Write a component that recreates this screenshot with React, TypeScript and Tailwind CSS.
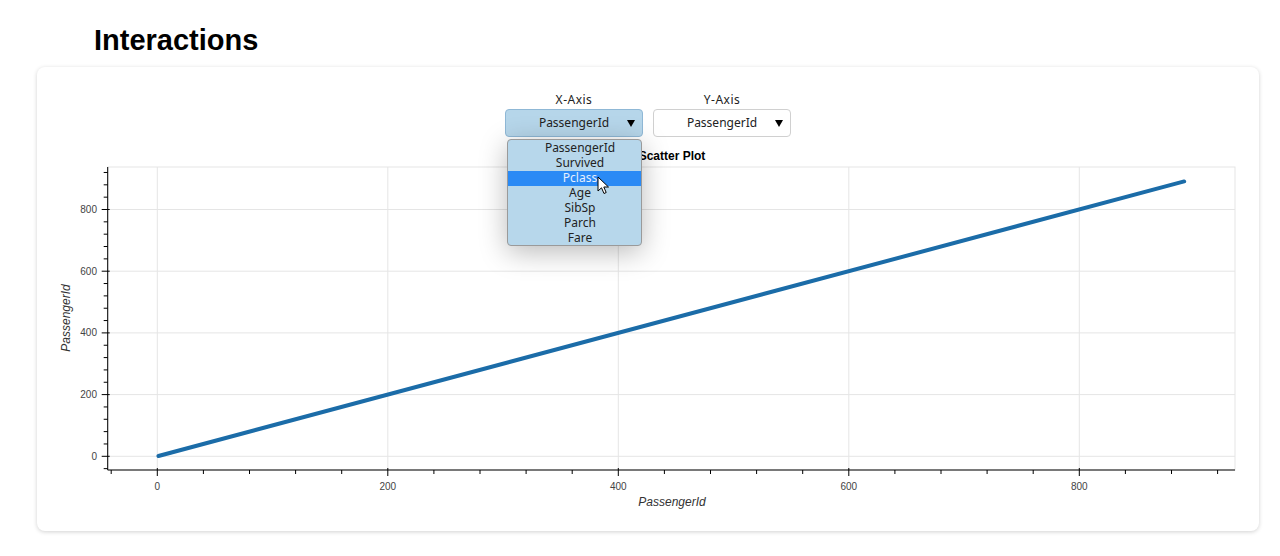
import React from "react";

const xs = (v: number) => 120.3 + v * 1.1525;
const ys = (v: number) => 316.3 - v * 0.3085;

function range(a: number, b: number, s: number) {
  const r: number[] = [];
  for (let v = a; v <= b; v += s) r.push(v);
  return r;
}

function Chart() {
  const majors = [0, 200, 400, 600, 800];
  const minorsX = range(-40, 920, 40).filter((v) => v % 200 !== 0);
  const minorsY = range(-40, 920, 40).filter((v) => v % 200 !== 0);
  return (
    <svg width={1222} height={384} className="block" style={{ fontFamily: "'Liberation Sans', Arial, sans-serif" }}>
      <text x={635} y={20} textAnchor="middle" fontSize={12} fontWeight="bold" fill="#000">
        Scatter Plot
      </text>
      <rect x={71} y={27} width={1127} height={303} fill="#fff" stroke="#e5e5e5" strokeWidth={1} />
      {majors.map((v) => (
        <line key={"gx" + v} x1={xs(v)} x2={xs(v)} y1={27} y2={330} stroke="#e5e5e5" strokeWidth={1} />
      ))}
      {majors.map((v) => (
        <line key={"gy" + v} x1={71} x2={1198} y1={ys(v)} y2={ys(v)} stroke="#e5e5e5" strokeWidth={1} />
      ))}
      <line x1={xs(1)} y1={ys(1)} x2={xs(891)} y2={ys(891)} stroke="#1b6ca8" strokeWidth={4} strokeLinecap="round" />
      <line x1={70.7} x2={1198} y1={330} y2={330} stroke="#000" strokeWidth={1} />
      <line x1={70.7} x2={70.7} y1={27} y2={330} stroke="#000" strokeWidth={1} />
      {majors.map((v) => (
        <line key={"tx" + v} x1={xs(v)} x2={xs(v)} y1={328} y2={336} stroke="#000" strokeWidth={1} />
      ))}
      {minorsX.map((v) => (
        <line key={"mx" + v} x1={xs(v)} x2={xs(v)} y1={330} y2={334} stroke="#000" strokeWidth={1} />
      ))}
      {majors.map((v) => (
        <line key={"ty" + v} x1={64.7} x2={72.7} y1={ys(v)} y2={ys(v)} stroke="#000" strokeWidth={1} />
      ))}
      {minorsY.map((v) => (
        <line key={"my" + v} x1={66.7} x2={70.7} y1={ys(v)} y2={ys(v)} stroke="#000" strokeWidth={1} />
      ))}
      {majors.map((v) => (
        <text key={"lx" + v} x={xs(v)} y={350} textAnchor="middle" fontSize={10} fill="#444">
          {v}
        </text>
      ))}
      {majors.map((v) => (
        <text key={"ly" + v} x={60} y={ys(v) + 3.5} textAnchor="end" fontSize={10} fill="#444">
          {v}
        </text>
      ))}
      <text x={635} y={366} textAnchor="middle" fontSize={12} fontStyle="italic" fill="#333">
        PassengerId
      </text>
      <text
        x={0}
        y={0}
        transform="translate(33 178) rotate(-90)"
        textAnchor="middle"
        fontSize={12}
        fontStyle="italic"
        fill="#333"
      >
        PassengerId
      </text>
    </svg>
  );
}

function SelectBox({ label, active }: { label: string; active?: boolean }) {
  return (
    <div className="flex flex-col items-center">
      <div className="h-[15px] text-[12px] leading-[15px] text-[#222] tracking-[0.5px] mb-[2px]">{label}</div>
      <div
        className={
          active
            ? "relative w-[138px] h-[28px] rounded-[4px] border border-[#8fb8d6] bg-[#b6d6ea] flex items-center justify-center text-[12px] text-[#222]"
            : "relative w-[138px] h-[28px] rounded-[4px] border border-[#d0d0d0] bg-white flex items-center justify-center text-[12px] text-[#222]"
        }
      >
        <span>PassengerId</span>
        <svg className="absolute right-[7px] top-[10px]" width="8" height="7" viewBox="0 0 8 7">
          <path d="M0 0 L8 0 L4 7 Z" fill="#000" />
        </svg>
      </div>
    </div>
  );
}

export default function App() {
  const options = ["PassengerId", "Survived", "Pclass", "Age", "SibSp", "Parch", "Fare"];
  return (
    <div className="w-[1280px] h-[556px] bg-white overflow-hidden" style={{ fontFamily: "'Liberation Sans', Arial, sans-serif" }}>
      <h1 className="pt-[24px] pl-[94px] text-[29px] leading-[32px] font-bold text-black">Interactions</h1>
      <div className="relative mt-[11px] ml-[37px] w-[1222px] h-[464px] rounded-[8px] bg-white shadow-[0_1px_4px_rgba(0,0,0,0.18)] pt-[25px]">
        <div className="flex justify-center gap-[10px]" style={{ fontFamily: "'Noto Sans', 'Noto Sans CJK KR', sans-serif" }}>
          <SelectBox label="X-Axis" active />
          <SelectBox label="Y-Axis" />
        </div>
        <div className="mt-[3px]">
          <Chart />
        </div>
        <div
          className="absolute left-[470px] top-[72px] w-[135px] h-[107px] rounded-[4px] border border-[#9a9a9a] bg-[#b7d7eb] pt-[1px] pl-[11px] shadow-[0_6px_28px_rgba(0,0,0,0.28)] overflow-hidden"
          style={{ fontFamily: "'Noto Sans', 'Noto Sans CJK KR', sans-serif" }}
        >
          {options.map((o) => (
            <div
              key={o}
              className={
                o === "Pclass"
                  ? "-ml-[11px] pl-[11px] h-[15px] leading-[13px] text-center text-[12px] bg-[#2a8af5] text-[#e6f0ff]"
                  : "h-[15px] leading-[13px] text-center text-[12px] text-[#222]"
              }
            >
              {o}
            </div>
          ))}
        </div>
        <svg className="absolute left-[560px] top-[109px]" width="14" height="20" viewBox="0 0 14 20">
          <path d="M1 1 L1 15 L4.5 11.8 L7 17.5 L9.2 16.5 L6.8 11 L11.5 11 Z" fill="#fff" stroke="#000" strokeWidth="1" strokeLinejoin="round" />
        </svg>
      </div>
    </div>
  );
}
